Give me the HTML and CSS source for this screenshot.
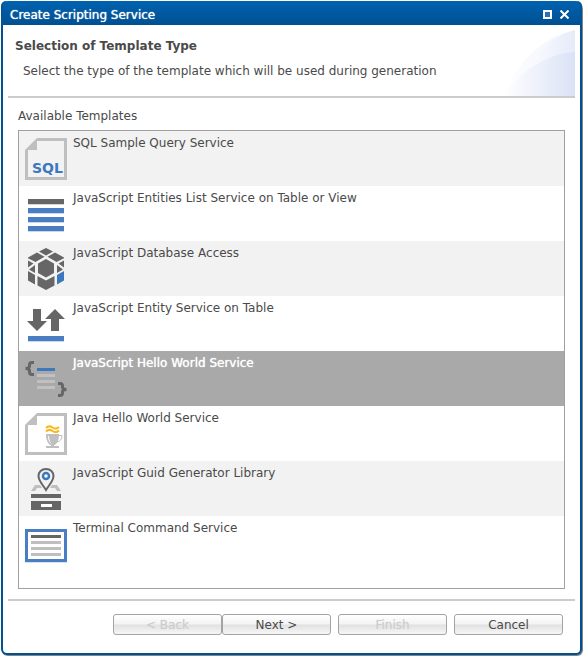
FILE: index.html
```html
<!DOCTYPE html>
<html lang="en">
<head>
<meta charset="utf-8">
<title>Create Scripting Service</title>
<link rel="stylesheet" href="styles.css">
</head>
<body>
<main class="window" role="dialog" aria-labelledby="window-title">
  <header class="titlebar">
    <span class="titlebar-text" id="window-title">Create Scripting Service</span>
    <button class="tool" type="button" aria-label="Maximize">
      <svg width="9" height="9" viewBox="0 0 9 9"><path d="M1 1H8V8H1Z" fill="#2f70b0" stroke="#fff" stroke-width="2"/></svg>
    </button>
    <button class="tool" type="button" aria-label="Close">
      <svg width="9" height="9" viewBox="0 0 9 9"><path d="M0.500 0.500L8.500 8.500M8.500 0.500L0.500 8.500" fill="none" stroke="#fff" stroke-width="2"/></svg>
    </button>
  </header>

  <section class="banner">
    <div class="banner-text">
      <h1 class="banner-title">Selection of Template Type</h1>
      <p class="banner-message">Select the type of the template which will be used during generation</p>
    </div>
    <svg class="banner-art" width="75" height="66" viewBox="0 0 75 66" aria-hidden="true">
      <defs>
        <linearGradient id="fade-light"><stop offset="0" stop-color="#fff"/><stop offset="1" stop-color="#eef2fb"/></linearGradient>
        <linearGradient id="fade-mid"><stop offset="0" stop-color="#fafbff"/><stop offset="1" stop-color="#e5ebf9"/></linearGradient>
        <linearGradient id="fade-deep"><stop offset="0" stop-color="#fff"/><stop offset="1" stop-color="#dae2f6"/></linearGradient>
      </defs>
      <path d="M3 66C16 34 40 8 75 0V66Z" fill="url(#fade-light)"/>
      <path d="M31 41C42 20 54 6 75 0V41Z" fill="url(#fade-mid)"/>
      <path d="M3 66C20 42 45 24 75 22V66Z" fill="url(#fade-deep)"/>
    </svg>
  </section>

  <section class="content">
    <h2 class="list-label" id="list-label">Available Templates</h2>
    <ul class="templates" role="listbox" aria-labelledby="list-label" tabindex="0">
      <li class="template" role="option" aria-selected="false">
        <svg class="icon" viewBox="0 0 42 42" aria-hidden="true">
          <path d="M12 1.500H40.500V40.500H1.500V12" fill="none" stroke="#bfbfbf" stroke-width="3"/>
          <path d="M12 0V12H0Z" fill="#bfbfbf"/>
          <text class="icon-text" x="7" y="35">SQL</text>
        </svg>
        <span>SQL Sample Query Service</span>
      </li>
      <li class="template" role="option" aria-selected="false">
        <svg class="icon" viewBox="0 0 42 42" aria-hidden="true">
          <path d="M3 6H39V12H3Z" fill="#d6d6d6"/><path d="M3 6H39V11H3Z" fill="#666"/>
          <path d="M3 15H39V21H3ZM3 24H39V30H3ZM3 33H39V39H3Z" fill="#c9d9ec"/>
          <path d="M3 15H39V20H3ZM3 24H39V29H3ZM3 33H39V38H3Z" fill="#4a7ec2"/>
        </svg>
        <span>JavaScript Entities List Service on Table or View</span>
      </li>
      <li class="template" role="option" aria-selected="false">
        <svg class="icon" viewBox="0 0 42 42" aria-hidden="true">
          <g fill="#666">
            <path d="M21 0L28 3.500L21 7.500L14 3.500Z"/>
            <path d="M12 4.500L19.500 8.800L10.500 14L3 10.300V9.500Z"/>
            <path d="M30 4.500L22.500 8.800L31.500 14L39 10.300V9.500Z"/>
            <path d="M3 12.500L8.500 15.500L3 19.500Z"/>
            <path d="M39 12.500L33.500 15.500L39 19.500Z"/>
            <path d="M21 11L29 15.500V25L21 29.500L13 25V15.500Z"/>
            <path d="M10 17V25L4 21.500Z"/>
            <path d="M32 17V25L38 21.500Z"/>
            <path d="M3 23L10 27V36.500L3 32.500Z"/>
            <path d="M12.500 28L21 32.500L29.500 28V37.500L21 42L12.500 37.500Z"/>
          </g>
          <path d="M32 27L39 23V32.500L32 36.500Z" fill="#3c78bd"/>
        </svg>
        <span>JavaScript Database Access</span>
      </li>
      <li class="template" role="option" aria-selected="false">
        <svg class="icon" viewBox="0 0 42 42" aria-hidden="true">
          <path d="M8 6H16V18H22L12 28L2 18H8ZM26 28V16H20L30 6L40 16H34V28Z" fill="#666"/>
          <path d="M3 38H39V39H3Z" fill="#c9d9ec"/><path d="M3 33H39V38H3Z" fill="#4a7ec2"/>
        </svg>
        <span>JavaScript Entity Service on Table</span>
      </li>
      <li class="template selected" role="option" aria-selected="true">
        <svg class="icon" viewBox="0 0 42 42" aria-hidden="true">
          <path d="M9 4.500H7Q4.500 4.500 4.500 7V8Q4.500 10.500 0.500 10.500Q4.500 10.500 4.500 13V14Q4.500 16.500 7 16.500H9" fill="none" stroke="#666" stroke-width="3"/>
          <path d="M33 25.500H35Q37.500 25.500 37.500 28V29Q37.500 31.500 41.500 31.500Q37.500 31.500 37.500 34V35Q37.500 37.500 35 37.500H33" fill="none" stroke="#666" stroke-width="3"/>
          <path d="M12 10H30V13H12Z" fill="#3c78bd"/>
          <path d="M12 16H30V19H12ZM12 22H30V25H12ZM12 28H30V31H12Z" fill="#c0c0c0"/>
        </svg>
        <span>JavaScript Hello World Service</span>
      </li>
      <li class="template" role="option" aria-selected="false">
        <svg class="icon" viewBox="0 0 42 42" aria-hidden="true">
          <path d="M12 1.500H40.500V40.500H1.500V12" fill="none" stroke="#bfbfbf" stroke-width="3"/>
          <path d="M12 0V12H0Z" fill="#bfbfbf"/>
          <path d="M21 21H34Q34 29 30 32H29V33H34V35H21V33H26V32H25Q21 29 21 21Z" fill="#bfbfbf"/>
          <path d="M34 22.500H37Q37 28 32 29" fill="none" stroke="#bfbfbf" stroke-width="1"/>
          <path d="M23 23H24Q24 28 27 31Q23 29 23 23Z" fill="#fff"/>
          <path d="M21 15Q24 12 27.500 14.500T34 14M21 18.500Q24 15.500 27.500 18T34 17.500" fill="none" stroke="#f9b91e" stroke-width="2"/>
        </svg>
        <span>Java Hello World Service</span>
      </li>
      <li class="template" role="option" aria-selected="false">
        <svg class="icon" viewBox="0 0 42 42" aria-hidden="true">
          <path d="M10 17H15L17 20H12L10 23H6ZM32 17H27L25 20H30L32 23H36Z" fill="#bfbfbf"/>
          <path d="M21 1C16.500 1 13.500 4 13.500 8C13.500 13 18 17 21 22C24 17 28.500 13 28.500 8C28.500 4 25.500 1 21 1Z" fill="#f2f2f2" stroke="#666" stroke-width="2"/>
          <circle cx="21" cy="8" r="3" fill="#fff" stroke="#3c78bd" stroke-width="2.500"/>
          <path d="M6 26H36V30H6ZM6 33H36V42H6Z" fill="#666"/>
          <path d="M16 36H27V39H16Z" fill="#fff"/>
        </svg>
        <span>JavaScript Guid Generator Library</span>
      </li>
      <li class="template" role="option" aria-selected="false">
        <svg class="icon" viewBox="0 0 42 42" aria-hidden="true">
          <path d="M0 38H42V40H0Z" fill="#d5e1f0"/>
          <path d="M1.500 7.500H40.500V37.500H1.500Z" fill="#fff" stroke="#4a7ec2" stroke-width="3"/>
          <path d="M6 12H36V15H6Z" fill="#666"/>
          <path d="M6 18H36V21H6ZM6 24H36V27H6ZM6 30H36V33H6Z" fill="#bfbfbf"/>
        </svg>
        <span>Terminal Command Service</span>
      </li>
    </ul>
  </section>

  <footer class="actions">
    <div class="pair">
      <button class="button" type="button" disabled>&lt; Back</button>
      <button class="button" type="button">Next &gt;</button>
    </div>
    <button class="button" type="button" disabled>Finish</button>
    <button class="button" type="button">Cancel</button>
  </footer>
</main>
</body>
</html>
```

FILE: styles.css
```css
* {
  box-sizing: border-box;
}

body {
  margin: 0;
  min-height: 100vh;
  display: flex;
  padding: 1px;
  background: #fff;
  color: #4a4a4a;
  font: 12px/16px Verdana, "DejaVu Sans", sans-serif;
}

h1,
h2,
p,
ul {
  margin: 0;
  padding: 0;
  font-size: 12px;
}

.window {
  flex: 1;
  display: flex;
  flex-direction: column;
  border: 2px solid #005092;
  border-top: 0;
  border-radius: 7px 7px 6px 6px;
  background: #fff;
  box-shadow: 1px 1px 1px #777;
}

.titlebar {
  display: flex;
  align-items: center;
  gap: 8px;
  height: 24px;
  padding: 3px 11px 0 7px;
  border-radius: 5px 5px 0 0;
  background: linear-gradient(#0062b0, #005092);
  box-shadow: -2px 0 #005598, 2px 0 #005598;
  color: #fff;
}

.titlebar-text {
  flex: 1;
  text-shadow: 0 0 1px #fff;
}

.tool {
  display: flex;
  padding: 0;
  border: 0;
  background: none;
}

.banner {
  display: flex;
  align-items: flex-end;
  justify-content: space-between;
  margin: 5px 5px 0;
  border-bottom: 2px solid #ccc;
}

.banner-text {
  flex: 1;
  align-self: flex-start;
  padding: 8px 0 0 7px;
}

.banner-message {
  padding: 9px 0 0 8px;
}

.banner-art {
  display: block;
}

.content {
  flex: 1;
  display: flex;
  flex-direction: column;
  padding: 10px 15px;
}

.list-label {
  font-weight: normal;
}

.templates {
  flex: 1;
  margin-top: 6px;
  border: 1px solid #a0a0a0;
  list-style: none;
}

.template {
  display: flex;
  gap: 6px;
  height: 55px;
  padding: 4px 6px;
}

.template:nth-child(odd) {
  background: #f2f2f2;
}

.template.selected {
  background: #a9a9a9;
  color: #fff;
  text-shadow: 0 0 1px #fff;
}

.icon {
  width: 42px;
  height: 42px;
  margin-top: 3px;
}

.icon-text {
  fill: #3c78bd;
  font: bold 14px "DejaVu Sans", sans-serif;
}

.actions {
  display: flex;
  justify-content: flex-end;
  gap: 7px;
  margin: 0 5px;
  padding: 13px 12px 18px;
  border-top: 2px solid #ccc;
}

.pair {
  display: flex;
}

.button {
  width: 109px;
  height: 21px;
  padding: 0;
  border: 1px solid #a3a3a3;
  border-radius: 3px;
  background: linear-gradient(#fff, #f3f3f3 48%, #e1e1e1 52%, #f6f6f6);
  color: #4a4a4a;
  font: inherit;
}

.button:disabled {
  color: #ccc;
  text-shadow: 0 0 1px #ddd;
}
```
